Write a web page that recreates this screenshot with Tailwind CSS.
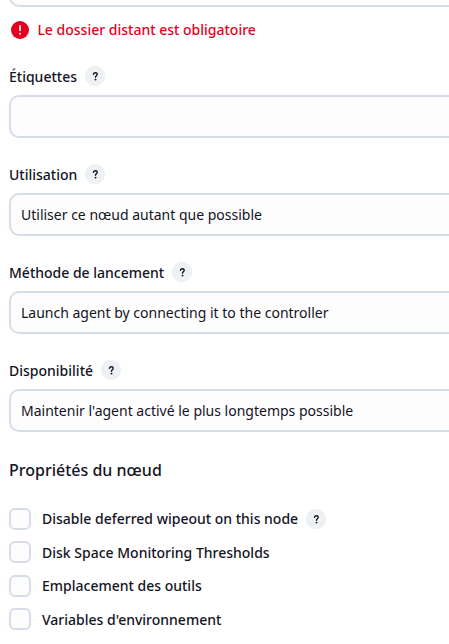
<!DOCTYPE html>
<html lang="fr">
<head>
<meta charset="utf-8">
<title>Configuration du nœud</title>
<script src="https://cdn.jsdelivr.net/npm/@tailwindcss/browser@4"></script>
</head>
<body class="bg-white overflow-hidden">
<svg class="hidden">
  <symbol id="help" viewBox="0 0 20 20">
    <circle cx="10" cy="10" r="9.75" fill="#eef2f5" stroke="#e7ebef" stroke-width=".5"/>
    <path d="M8.5 8.3C8.6 7.3 9.4 6.8 10.4 6.8c1.1 0 1.8.6 1.8 1.5 0 1.4-1.7 1.5-1.7 2.9" fill="none" stroke="#14141f" stroke-width="1.4" stroke-linecap="round" stroke-linejoin="round"/>
    <circle cx="10.5" cy="13.6" r=".95" fill="#14141f"/>
  </symbol>
</svg>
<main class="h-[644px] w-full pl-[9px] overflow-hidden font-['Noto_Sans',sans-serif] text-[14px] leading-5 text-[#14141f]">
  <div class="h-[7px] flex items-end overflow-hidden"><div class="h-[43px] w-full shrink-0 rounded-l-[10px] border-2 border-r-0 border-[#d6dce8] bg-[#fdfdfd]"></div></div>
  <div class="mt-[13px] ml-[2px] flex h-5 items-center gap-[8.4px] font-medium text-[#e6001f]">
    <svg class="size-[18px] shrink-0" viewBox="0 0 18 18"><circle cx="9" cy="9" r="9" fill="#e6001f"/><path d="M9 4.8v4.6" stroke="#fff" stroke-width="1.6" stroke-linecap="round"/><circle cx="9" cy="12.7" r="1" fill="#fff"/></svg>
    <span>Le dossier distant est obligatoire</span>
  </div>
  <div class="mt-[26px] flex flex-col gap-[26px]">
    <section>
      <div class="flex h-5 items-center gap-2 font-medium"><label class="pt-[2px]">Étiquettes</label><svg class="size-5"><use href="#help"/></svg></div>
      <div class="mt-[9px] h-[43px] rounded-l-[10px] border-2 border-r-0 border-[#d6dce8] bg-[#fdfdfd]"></div>
    </section>
    <section>
      <div class="flex h-5 items-center gap-2 font-medium"><label class="pt-[2px]">Utilisation</label><svg class="size-5"><use href="#help"/></svg></div>
      <div class="mt-[9px] flex h-[43px] items-center rounded-l-[10px] border-2 border-r-0 border-[#d6dce8] bg-[#fdfdfd] px-[10px]">Utiliser ce nœud autant que possible</div>
    </section>
    <section>
      <div class="flex h-5 items-center gap-2 font-medium"><label class="pt-[2px]">Méthode de lancement</label><svg class="size-5"><use href="#help"/></svg></div>
      <div class="mt-[9px] flex h-[43px] items-center rounded-l-[10px] border-2 border-r-0 border-[#d6dce8] bg-[#fdfdfd] px-[10px]">Launch agent by connecting it to the controller</div>
    </section>
    <section>
      <div class="flex h-5 items-center gap-2 font-medium"><label class="pt-[2px]">Disponibilité</label><svg class="size-5"><use href="#help"/></svg></div>
      <div class="mt-[9px] flex h-[43px] items-center rounded-l-[10px] border-2 border-r-0 border-[#d6dce8] bg-[#fdfdfd] px-[10px]">Maintenir l'agent activé le plus longtemps possible</div>
    </section>
  </div>
  <h2 class="mt-[26px] text-base leading-6 font-medium">Propriétés du nœud</h2>
  <div class="mt-[26px] flex flex-col gap-[11.4px] font-medium">
    <div class="flex h-[22px] items-center"><span class="size-[22px] rounded-[6px] border-2 border-[#d6dce8] bg-[#fdfdfd]"></span><span class="mt-[0.8px] ml-[11px]">Disable deferred wipeout on this node</span><svg class="ml-2 size-5"><use href="#help"/></svg></div>
    <div class="flex h-[22px] items-center"><span class="size-[22px] rounded-[6px] border-2 border-[#d6dce8] bg-[#fdfdfd]"></span><span class="mt-[0.8px] ml-[11px]">Disk Space Monitoring Thresholds</span></div>
    <div class="flex h-[22px] items-center"><span class="size-[22px] rounded-[6px] border-2 border-[#d6dce8] bg-[#fdfdfd]"></span><span class="mt-[0.8px] ml-[11px]">Emplacement des outils</span></div>
    <div class="flex h-[22px] items-center"><span class="size-[22px] rounded-[6px] border-2 border-[#d6dce8] bg-[#fdfdfd]"></span><span class="mt-[0.8px] ml-[11px]">Variables d'environnement</span></div>
  </div>
</main>
</body>
</html>
